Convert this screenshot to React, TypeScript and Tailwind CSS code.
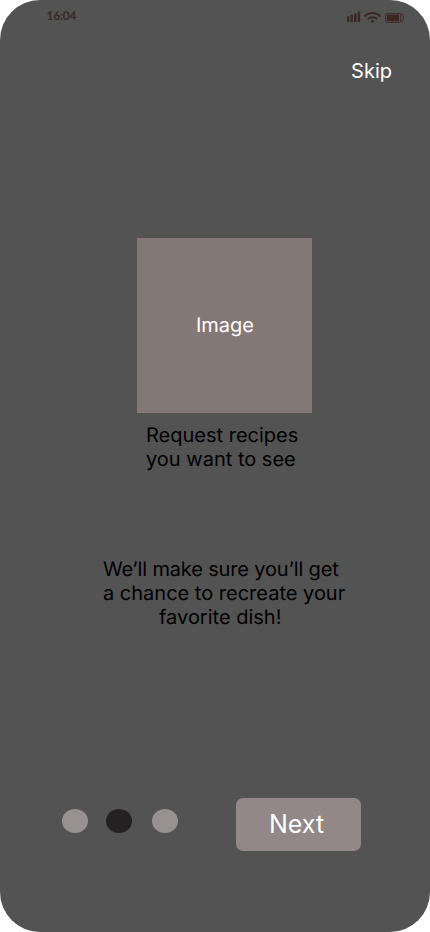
function StatusIcons() {
  return (
    <svg width="60" height="14" viewBox="0 0 60 14" fill="#3d2725" aria-hidden="true">
      <rect x="1" y="6" width="2.4" height="6.3" rx="0.7" />
      <rect x="4.5" y="4.7" width="2.5" height="7.6" rx="0.7" />
      <rect x="8" y="3.2" width="2.5" height="9.1" rx="0.7" />
      <rect x="11.6" y="1.6" width="2.5" height="10.7" rx="0.7" />
      <g fill="none" stroke="#3d2725" strokeWidth="1.9">
        <path d="M18.6 6.5C23 1.9 30 1.9 34.4 6.5" />
        <path d="M21.8 9.2C24.5 6.5 28.5 6.5 31.2 9.2" />
      </g>
      <circle cx="26.5" cy="11.2" r="1.5" />
      <rect x="39.7" y="3.3" width="15" height="9.2" rx="1.7" fill="none" stroke="#3d2725" strokeWidth="0.9" />
      <rect x="41" y="4.6" width="12" height="6.7" rx="0.5" />
      <path d="M55 3.8q2.6.8 2.6 4t-2.6 4" fill="none" stroke="#3d2725" strokeWidth="1" />
    </svg>
  );
}

export default function App() {
  return (
    <div className="h-[932px] w-[430px] bg-white">
      <main className="flex h-full flex-col overflow-hidden rounded-[40px] bg-[#535353] font-['Inter',sans-serif] text-xl leading-6 text-black [text-rendering:geometricPrecision]">
        <header className="flex h-[59px] items-start justify-between pr-6 pl-[46.5px]">
          <span className="mt-2 font-['Lato',sans-serif] text-[12px] leading-4 font-bold tracking-[-0.25px] text-[#3d2725]">16:04</span>
          <span className="mt-2.5 block"><StatusIcons /></span>
        </header>
        <button className="mr-[38px] h-6 self-end text-white">Skip</button>
        <section className="mt-[155px] ml-[137px] flex size-[175px] items-center justify-center bg-[#847877] pb-px pl-px text-white">
          Image
        </section>
        <h1 className="mt-2.5 ml-[146px]">
          Request recipes<br />you want to see
        </h1>
        <div className="mt-[86px] ml-[103px] flex w-[242px] flex-col whitespace-nowrap">
          <p className="tracking-[-0.16px]">We’ll make sure you’ll get</p>
          <p>a chance to recreate your</p>
          <p className="pl-14">favorite dish!</p>
        </div>
        <footer className="mt-[169px] ml-[62px] flex h-[53px] items-start">
          <div className="mt-[11px] flex">
            <span className="h-6 w-[26px] rounded-[50%] bg-[#979191]" />
            <span className="ml-[18px] h-6 w-[26px] rounded-[50%] bg-[#242122]" />
            <span className="ml-5 h-6 w-[26px] rounded-[50%] bg-[#979191]" />
          </div>
          <button className="ml-[58px] flex h-[53px] w-[125px] items-center rounded-[7px] bg-[#928888] pb-px pl-[33px] text-[25px] leading-[30px] text-white">
            Next
          </button>
        </footer>
      </main>
    </div>
  );
}
